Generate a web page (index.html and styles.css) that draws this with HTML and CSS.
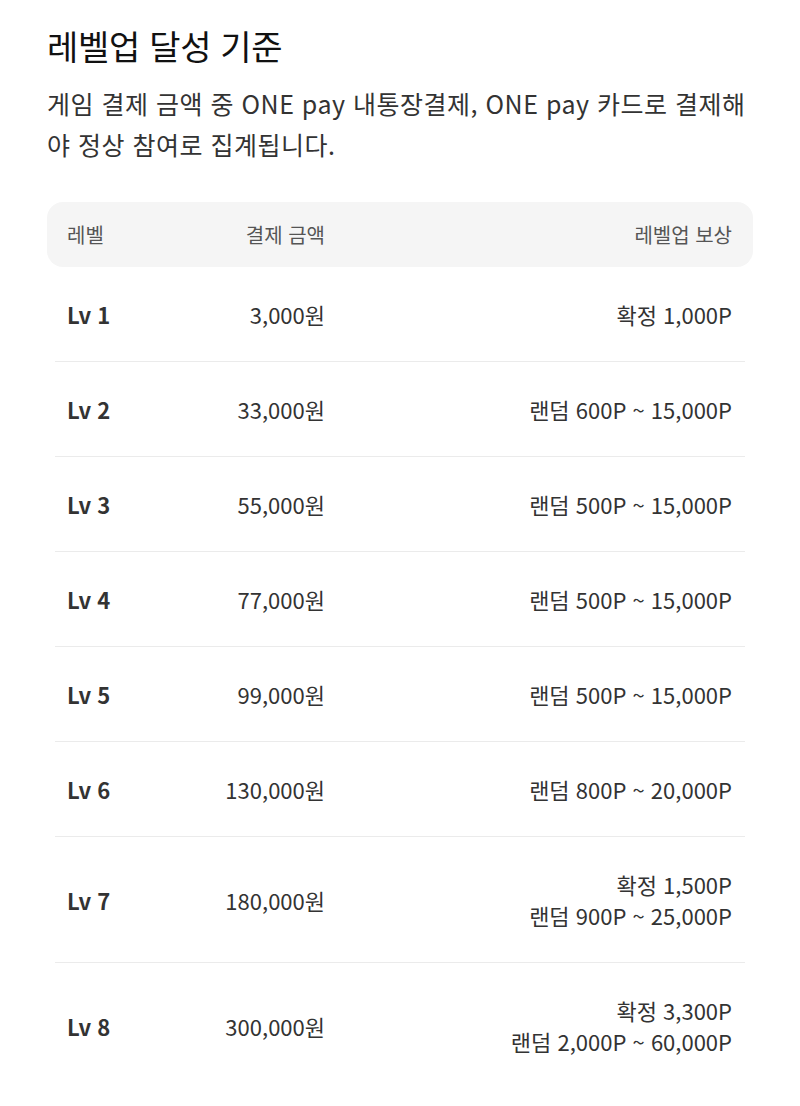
FILE: index.html
```html
<!DOCTYPE html>
<html lang="ko">
<head>
<meta charset="utf-8">
<link rel="stylesheet" href="styles.css">
</head>
<body>
<main class="page">
  <h1 class="title">레벨업 달성 기준</h1>
  <p class="desc">게임 결제 금액 중 ONE pay 내통장결제, ONE pay 카드로 결제해야 정상 참여로 집계됩니다.</p>
  <div class="table">
    <div class="thead">
      <span class="c-lv">레벨</span>
      <span class="c-amt">결제 금액</span>
      <span class="c-rew">레벨업 보상</span>
    </div>
    <div class="tbody">
      <div class="row"><span class="c-lv lv">Lv 1</span><span class="c-amt">3,000원</span><span class="c-rew">확정 1,000P</span></div>
      <div class="row"><span class="c-lv lv">Lv 2</span><span class="c-amt">33,000원</span><span class="c-rew">랜덤 600P ~ 15,000P</span></div>
      <div class="row"><span class="c-lv lv">Lv 3</span><span class="c-amt">55,000원</span><span class="c-rew">랜덤 500P ~ 15,000P</span></div>
      <div class="row"><span class="c-lv lv">Lv 4</span><span class="c-amt">77,000원</span><span class="c-rew">랜덤 500P ~ 15,000P</span></div>
      <div class="row"><span class="c-lv lv">Lv 5</span><span class="c-amt">99,000원</span><span class="c-rew">랜덤 500P ~ 15,000P</span></div>
      <div class="row"><span class="c-lv lv">Lv 6</span><span class="c-amt">130,000원</span><span class="c-rew">랜덤 800P ~ 20,000P</span></div>
      <div class="row"><span class="c-lv lv">Lv 7</span><span class="c-amt">180,000원</span><span class="c-rew">확정 1,500P<br>랜덤 900P ~ 25,000P</span></div>
      <div class="row"><span class="c-lv lv">Lv 8</span><span class="c-amt">300,000원</span><span class="c-rew">확정 3,300P<br>랜덤 2,000P ~ 60,000P</span></div>
    </div>
  </div>
</main>
</body>
</html>
```

FILE: styles.css
```css
* { box-sizing: border-box; }
html, body { margin: 0; padding: 0; background: #fff; }
body {
  font-family: "Noto Sans CJK KR", "Noto Sans", sans-serif;
  color: #222;
}
.page {
  padding: 20px 47px 0 47px;
}
.title {
  margin: 0;
  font-size: 34px;
  font-weight: 400;
  line-height: 52px;
  color: #111;
  letter-spacing: -0.3px;
}
.desc {
  margin: 11px 0 0 0;
  font-size: 25px;
  line-height: 41px;
  color: #333;
  font-weight: 400;
  letter-spacing: 0.5px;
}
.table { margin-top: 37px; }
.thead {
  display: grid;
  grid-template-columns: 100px 158px 1fr;
  align-items: center;
  height: 65px;
  padding: 0 21px 0 20px;
  background: #f5f5f5;
  border-radius: 16px;
  font-size: 20px;
  color: #555;
}
.tbody { margin: 0 8px; }
.row {
  display: grid;
  grid-template-columns: 100px 158px 1fr;
  align-items: center;
  padding: 32px 13px 31px 12px;
  border-bottom: 1px solid #ebebeb;
  font-size: 22px;
  line-height: 31px;
  color: #333;
}
.row:last-child { border-bottom: none; }
.c-amt, .c-rew { text-align: right; }
.lv { font-weight: 700; color: #333; }
```
